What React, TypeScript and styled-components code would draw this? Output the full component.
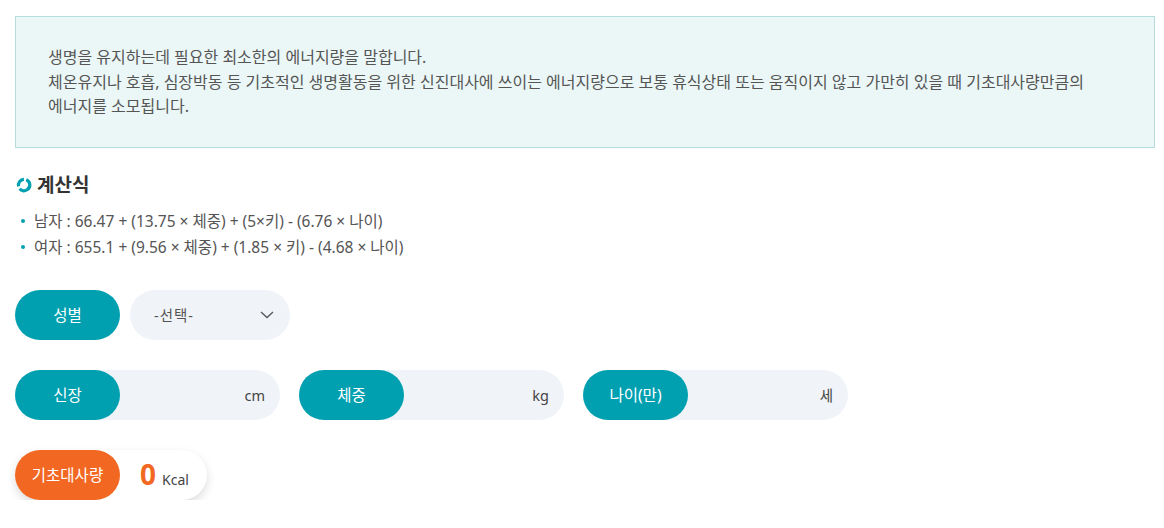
import styled, { createGlobalStyle } from 'styled-components'

const GlobalStyle = createGlobalStyle`
  * { box-sizing: border-box; }
  body {
    margin: 0;
    background: #fff;
    font-family: "Noto Sans", "Noto Sans CJK KR", sans-serif;
    color: #555;
  }
`

const teal = '#00a0b0'
const orange = '#f26822'

const Page = styled.div`
  padding: 16px 9px 0 15px;
`

const InfoBox = styled.div`
  background: #ebf7f7;
  border: 1px solid #b7dcdc;
  padding: 28px 32px 28px;
  font-size: 16px;
  line-height: 24.5px;
  color: #555;
`

const Heading = styled.h3`
  display: flex;
  align-items: center;
  gap: 5px;
  margin: 25px 0 0 1px;
  font-size: 19px;
  font-weight: 700;
  color: #333;
  line-height: 24px;
`

const FormulaList = styled.ul`
  list-style: none;
  margin: 11px 0 0;
  padding: 0 0 0 6px;
  font-size: 15.5px;
  line-height: 26px;
  color: #555;
`

const FormulaItem = styled.li`
  display: flex;
  align-items: center;
  &::before {
    content: '';
    width: 4px;
    height: 4px;
    border-radius: 50%;
    background: ${teal};
    margin-right: 9px;
  }
`

const Row = styled.div<{ $top: number }>`
  display: flex;
  gap: 19px;
  margin-top: ${p => p.$top}px;
`

const Field = styled.div<{ $width: number; $shadow?: boolean; $bg?: string }>`
  display: flex;
  align-items: center;
  width: ${p => p.$width}px;
  height: 50px;
  border-radius: 25px;
  background: ${p => p.$bg ?? '#f0f3f8'};
  box-shadow: ${p => (p.$shadow ? '0 4px 10px rgba(0,0,0,0.14)' : 'none')};
`

const Label = styled.div<{ $color?: string }>`
  flex: 0 0 105px;
  height: 50px;
  border-radius: 25px;
  background: ${p => p.$color ?? teal};
  color: #fff;
  font-size: 15.5px;
  display: flex;
  align-items: center;
  justify-content: center;
`

const Unit = styled.span`
  margin-left: auto;
  padding-right: 15px;
  font-size: 14.5px;
  color: #444;
`

const SelectBox = styled.div`
  display: flex;
  align-items: center;
  width: 160px;
  height: 50px;
  border-radius: 25px;
  background: #f0f3f8;
  padding: 0 16px 0 24px;
  margin-left: -9px;
  font-size: 14.5px;
  color: #555;
  letter-spacing: 1px;
  justify-content: space-between;
`

const ResultValue = styled.div`
  display: flex;
  align-items: baseline;
  gap: 6px;
  padding-left: 20px;
`

const Zero = styled.span`
  font-size: 28px;
  font-weight: 700;
  color: ${orange};
  line-height: 1;
`

const Kcal = styled.span`
  font-size: 14px;
  color: #444;
`

const RingIcon = () => (
  <svg width="16" height="16" viewBox="0 0 16 16">
    <path d="M10.2 2.7 A5.6 5.6 0 0 1 11.6 12.4 A5.6 5.6 0 0 1 3.6 11.8" fill="none" stroke={teal} strokeWidth="3.2" />
    <path d="M2.6 9.4 A5.6 5.6 0 0 1 7.9 2.4" fill="none" stroke={teal} strokeWidth="3.2" />
  </svg>
)

const Chevron = () => (
  <svg width="14" height="8" viewBox="0 0 14 8">
    <path d="M1 1 L7 6.5 L13 1" fill="none" stroke="#555" strokeWidth="1.3" />
  </svg>
)

export default function App() {
  return (
    <Page>
      <GlobalStyle />
      <InfoBox>
        생명을 유지하는데 필요한 최소한의 에너지량을 말합니다.
        <br />
        체온유지나 호흡, 심장박동 등 기초적인 생명활동을 위한 신진대사에 쓰이는 에너지량으로 보통 휴식상태 또는 움직이지 않고 가만히 있을 때 기초대사량만큼의
        <br />
        에너지를 소모됩니다.
      </InfoBox>

      <Heading>
        <RingIcon />
        계산식
      </Heading>
      <FormulaList>
        <FormulaItem>남자 : 66.47 + (13.75 × 체중) + (5×키) - (6.76 × 나이)</FormulaItem>
        <FormulaItem>여자 : 655.1 + (9.56 × 체중) + (1.85 × 키) - (4.68 × 나이)</FormulaItem>
      </FormulaList>

      <Row $top={30}>
        <Label>성별</Label>
        <SelectBox>
          -선택-
          <Chevron />
        </SelectBox>
      </Row>

      <Row $top={30}>
        <Field $width={265}>
          <Label>신장</Label>
          <Unit>cm</Unit>
        </Field>
        <Field $width={265}>
          <Label>체중</Label>
          <Unit>kg</Unit>
        </Field>
        <Field $width={265}>
          <Label>나이(만)</Label>
          <Unit>세</Unit>
        </Field>
      </Row>

      <Row $top={30}>
        <Field $width={192} $shadow $bg="#fff">
          <Label $color={orange}>기초대사량</Label>
          <ResultValue>
            <Zero>0</Zero>
            <Kcal>Kcal</Kcal>
          </ResultValue>
        </Field>
      </Row>
    </Page>
  )
}
